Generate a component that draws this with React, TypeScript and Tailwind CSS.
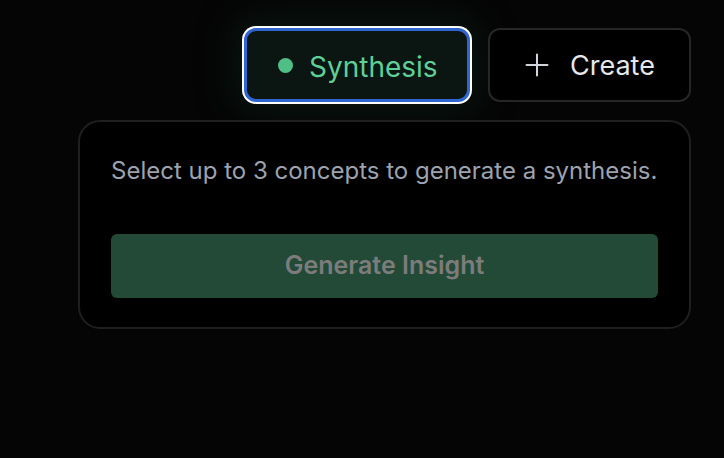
import { Plus } from 'lucide-react';

export default function App(): React.ReactElement {
  return (
    <div
      className="flex h-[458px] w-[724px] flex-col items-end bg-[#050505] pt-[28px] pr-[33px]"
      style={{ fontFamily: 'Inter, "Noto Sans", sans-serif' }}
    >
      <div className="flex items-center gap-[18px]">
        <button className="flex h-[74px] w-[226px] items-center gap-[16px] rounded-[12px] border-[3px] border-[#2f66d0] bg-[#0b1511] pt-[3px] pl-[31px] text-[28px] text-[#5fcf98] shadow-[0_0_40px_10px_rgba(20,60,40,0.3)] ring-2 ring-white">
          <span className="-mt-[3px] h-[15px] w-[15px] rounded-full bg-[#4fbf86]" />
          Synthesis
        </button>
        <button className="flex h-[74px] w-[203px] items-center gap-[15px] rounded-[12px] border-2 border-[#262626] bg-black pt-[3px] pl-[29px] text-[27px] text-[#e5e7eb]">
          <Plus className="-mt-[3px] h-[36px] w-[36px] text-[#d1d5db]" strokeWidth={1.35} />
          Create
        </button>
      </div>
      <div className="mt-[18px] flex h-[209px] w-[613px] flex-col rounded-[22px] border-2 border-[#1f1f1f] bg-black px-[31px] pt-[33px]">
        <p className="text-[24px] leading-[32px] text-[#9ca3af]">
          Select up to 3 concepts to generate a synthesis.
        </p>
        <button className="mt-[47px] flex h-[64px] w-full items-center justify-center rounded-[6px] bg-[#234a37] text-[25px] font-semibold text-[#7c7c7c]">
          Generate Insight
        </button>
      </div>
    </div>
  );
}
